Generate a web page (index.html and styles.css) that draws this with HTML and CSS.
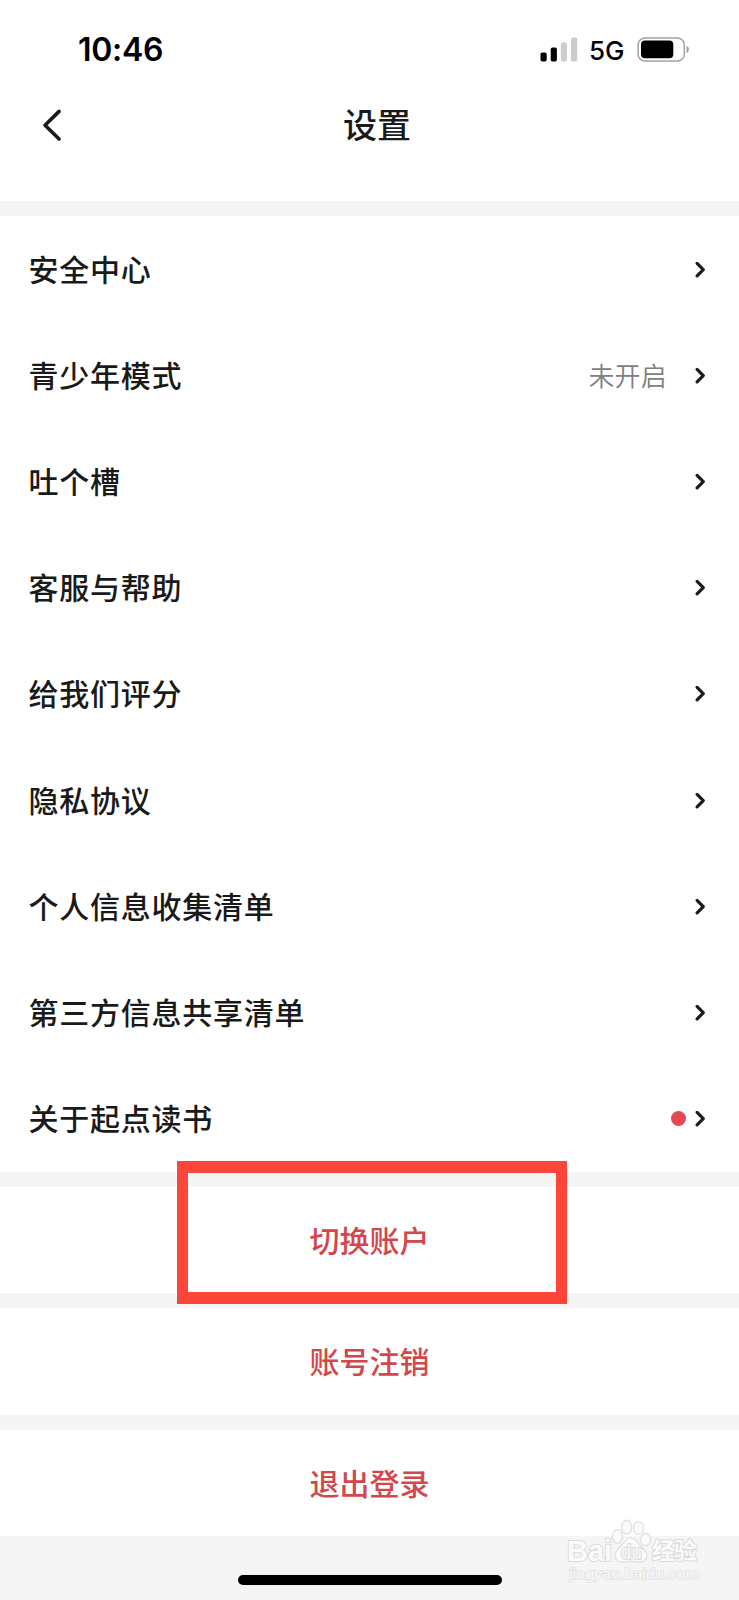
FILE: index.html
```html
<!DOCTYPE html>
<html lang="zh-CN">
<head>
<meta charset="utf-8">
<title>设置</title>
<link rel="stylesheet" href="styles.css">
</head>
<body>
<svg class="defs" width="0" height="0">
  <symbol id="chevron" viewBox="0 0 11 17"><path d="M2.1 2.3 8.3 8.6 2.1 14.9" fill="none" stroke="#1a1a1a" stroke-width="3.1" stroke-linecap="round" stroke-linejoin="round"/></symbol>
</svg>
<div class="screen">
  <div class="status">
    <span class="time">10:46</span>
    <div class="indicators">
      <svg class="signal" width="38" height="25" viewBox="0 0 38 25">
        <rect x="0.5" y="15.5" width="6.2" height="9" rx="1.8"/>
        <rect x="10.7" y="10.5" width="6.2" height="14" rx="1.8"/>
        <rect x="20.8" y="5.5" width="6.2" height="19" rx="1.8" fill="#ccc"/>
        <rect x="31" y="0.5" width="6.2" height="24" rx="1.8" fill="#ccc"/>
      </svg>
      <span class="network">5G</span>
      <svg class="battery" width="54" height="25" viewBox="0 0 54 25">
        <rect x="1.1" y="1" width="46.2" height="23" rx="6.8" fill="none" stroke="#a3a3a3" stroke-width="1.5"/>
        <rect x="4" y="3.6" width="32.3" height="17.6" rx="4"/>
        <path d="M49.6 8.8c3 1.5 3 5.9 0 7.4z" fill="#999"/>
      </svg>
    </div>
  </div>
  <header class="nav">
    <svg class="back" width="22" height="34" viewBox="0 0 22 34"><path d="M19.1 3.4 5 17.2l14.1 13.8" fill="none" stroke="#1a1a1a" stroke-width="3.6" stroke-linecap="round" stroke-linejoin="round"/></svg>
    <h1 class="title">设置</h1>
  </header>
  <ul class="list">
    <li class="row"><span class="label">安全中心</span><svg class="arrow"><use href="#chevron"/></svg></li>
    <li class="row"><span class="label">青少年模式</span><span class="value">未开启</span><svg class="arrow"><use href="#chevron"/></svg></li>
    <li class="row"><span class="label">吐个槽</span><svg class="arrow"><use href="#chevron"/></svg></li>
    <li class="row"><span class="label">客服与帮助</span><svg class="arrow"><use href="#chevron"/></svg></li>
    <li class="row"><span class="label">给我们评分</span><svg class="arrow"><use href="#chevron"/></svg></li>
    <li class="row"><span class="label">隐私协议</span><svg class="arrow"><use href="#chevron"/></svg></li>
    <li class="row"><span class="label">个人信息收集清单</span><svg class="arrow"><use href="#chevron"/></svg></li>
    <li class="row"><span class="label">第三方信息共享清单</span><svg class="arrow"><use href="#chevron"/></svg></li>
    <li class="row"><span class="label">关于起点读书</span><i class="dot"></i><svg class="arrow"><use href="#chevron"/></svg></li>
  </ul>
  <div class="actions">
    <div class="action">切换账户<div class="highlight"></div></div>
    <div class="action">账号注销</div>
    <div class="action">退出登录</div>
  </div>
  <footer class="bottom"><div class="home"></div></footer>
  <svg class="watermark" width="150" height="70" viewBox="0 0 150 70">
    <g fill="#fafafa" stroke="#dedede" stroke-width="1.2">
      <ellipse cx="17.5" cy="22.5" rx="5" ry="7"/>
      <ellipse cx="26.7" cy="13.2" rx="5" ry="7"/>
      <ellipse cx="38.5" cy="14" rx="5" ry="6.5"/>
      <ellipse cx="45.7" cy="25.5" rx="5" ry="6.2"/>
      <path d="M31 24c-5 0-6 4-10 8-4 3.5-6.500 6-6 9.500.6 5 4 7 9 6.500 5-1 9-1 14 0 5 .6 9-2 9-6.500 0-4-3-6-6-9-4-4-5-8.500-10-8.500z"/>
    </g>
    <g class="brand">
      <text x="-33" y="47" class="bai" textLength="45" lengthAdjust="spacingAndGlyphs">Bai</text>
      <text x="21" y="44.5" class="du" textLength="21" lengthAdjust="spacingAndGlyphs">du</text>
      <text x="52" y="45" class="cn" textLength="45">经验</text>
    </g>
    <text x="-31" y="65" class="url" textLength="130" lengthAdjust="spacingAndGlyphs">jingyan.baidu.com</text>
  </svg>
</div>
</body>
</html>
```
FILE: styles.css
```css
* { box-sizing: border-box; }

body {
  margin: 0;
  background: #f5f5f5;
  font-family: "Noto Sans CJK SC", sans-serif;
  color: #1a1a1a;
}

.defs { position: absolute; }

.screen {
  position: relative;
  width: 739px;
  height: 1600px;
  overflow: hidden;
  display: flex;
  flex-direction: column;
}

.status {
  height: 86px;
  padding: 12px 48px 0 78px;
  background: #fff;
  display: flex;
  align-items: center;
  justify-content: space-between;
  font-family: Inter, sans-serif;
  color: #000;
}

.time { padding-top: 2px; font-size: 32px; font-weight: 600; line-height: 40px; letter-spacing: -.3px; }
.indicators { display: flex; align-items: center; }
.network { margin: 3px 13px 0 11px; font-size: 26px; font-weight: 500; line-height: 30px; width: 35px; white-space: nowrap; }

.nav {
  height: 115px;
  padding: 17px 0 0 40px;
  background: #fff;
  display: grid;
  grid-template-columns: 22px 1fr 47px;
  align-items: start;
}

.back { margin-top: 5px; }
.title { margin: 0; font-size: 34px; font-weight: 500; line-height: 42px; text-align: center; }

.list {
  list-style: none;
  margin: 15px 0;
  padding: 0;
  height: 956px;
  background: #fff;
  display: grid;
  grid-template-rows: repeat(9, 1fr);
}

.row {
  display: flex;
  align-items: center;
  padding: 0 33px 0 28.5px;
  font-size: 30px;
  font-weight: 500;
  letter-spacing: .75px;
  line-height: 44px;
}

.label { flex: 1; padding-bottom: 3px; }
.value { font-size: 26px; font-weight: 350; letter-spacing: .2px; color: #808080; margin-right: 28px; }
.arrow { width: 11px; height: 17px; }
.dot { width: 15px; height: 15px; border-radius: 50%; background: #e8474f; margin-right: 9px; }

.actions { display: flex; flex-direction: column; gap: 15px; }

.action {
  position: relative;
  height: 106.3px;
  padding-bottom: 2px;
  background: #fff;
  display: flex;
  align-items: center;
  justify-content: center;
  font-size: 30px;
  font-weight: 500;
  color: #d3474b;
}

.highlight {
  position: absolute;
  left: 177px;
  top: -26px;
  width: 390px;
  height: 143px;
  border: 11px solid #fd4639;
  border-block-width: 12px;
  z-index: 1;
}

.bottom { flex: 1; display: flex; justify-content: center; padding-top: 39px; }
.home { width: 264px; height: 10px; border-radius: 5px; background: #000; }

.watermark { position: absolute; left: 600px; top: 1514px; overflow: visible; }
.brand { font-family: "Liberation Sans", sans-serif; font-weight: 700; fill: #fafafa; stroke: #dcdcdc; stroke-width: 2px; paint-order: stroke; }
.bai { font-size: 29px; }
.du { font-size: 20px; fill: #f3f3f3; }
.cn { font-family: "Noto Sans CJK SC", sans-serif; font-size: 23px; }
.url { font-family: "Liberation Sans", sans-serif; font-size: 15px; fill: #fafafa; stroke: #e0e0e0; stroke-width: 1.4px; paint-order: stroke; }
```
